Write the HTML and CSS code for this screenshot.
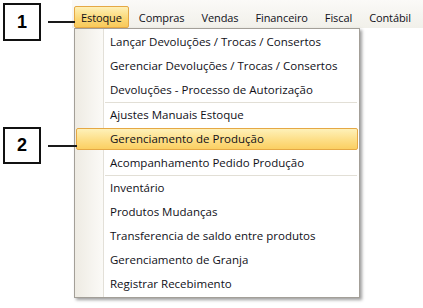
FILE: index.html
```html
<!DOCTYPE html>
<html lang="pt-BR">
<head>
<meta charset="utf-8">
<title>Menu Estoque</title>
<link rel="stylesheet" href="styles.css">
</head>
<body>
<div class="screen">
  <div class="callout callout-1">1</div>
  <div class="callout callout-2">2</div>
  <nav class="menubar">
    <span class="bar-item active">Estoque</span>
    <span class="bar-item">Compras</span>
    <span class="bar-item">Vendas</span>
    <span class="bar-item">Financeiro</span>
    <span class="bar-item">Fiscal</span>
    <span class="bar-item">Contábil</span>
  </nav>
  <ul class="dropdown">
    <li class="item">Lançar Devoluções / Trocas / Consertos</li>
    <li class="item">Gerenciar Devoluções / Trocas / Consertos</li>
    <li class="item">Devoluções - Processo de Autorização</li>
    <li class="sep"></li>
    <li class="item">Ajustes Manuais Estoque</li>
    <li class="item hot">Gerenciamento de Produção</li>
    <li class="item">Acompanhamento Pedido Produção</li>
    <li class="sep"></li>
    <li class="item">Inventário</li>
    <li class="item">Produtos Mudanças</li>
    <li class="item">Transferencia de saldo entre produtos</li>
    <li class="item">Gerenciamento de Granja</li>
    <li class="item">Registrar Recebimento</li>
  </ul>
</div>
</body>
</html>
```
FILE: styles.css
```css
html, body {
  margin: 0;
  padding: 0;
  background: #ffffff;
}

.screen {
  position: relative;
  width: 423px;
  height: 308px;
  overflow: hidden;
  font-family: "Open Sans", "Noto Sans", sans-serif;
  font-size: 11.5px;
  color: #101018;
}

/* numbered callouts */
.callout {
  position: absolute;
  left: 3px;
  width: 38px;
  height: 38px;
  box-sizing: border-box;
  border: 2px solid #111;
  background: #fff;
  display: flex;
  align-items: center;
  justify-content: center;
  font-family: "Liberation Sans", Arial, sans-serif;
  font-weight: bold;
  font-size: 18px;
  color: #000;
}
.callout::after {
  content: "";
  position: absolute;
  left: 43px;
  top: 50%;
  height: 2px;
  margin-top: -1px;
  background: #1a1a1a;
}
.callout-1 { top: 3px; }
.callout-1::after { width: 27px; }
.callout-2 { top: 127px; height: 37px; }
.callout-2::after { width: 29px; }

/* menu bar */
.menubar {
  margin-left: 72px;
  height: 28px;
  padding: 6px 0 0 2px;
  box-sizing: border-box;
  display: flex;
  gap: 3px;
  font-size: 11px;
  letter-spacing: -0.1px;
  background: linear-gradient(#fbfaf8, #f1f0ea);
}
.bar-item {
  height: 22px;
  line-height: 21px;
  padding: 0 6px;
  box-sizing: border-box;
  border: 1px solid transparent;
  border-radius: 2px;
  white-space: nowrap;
}
.bar-item.active {
  border-color: #e5a844;
  background: linear-gradient(#fef0b6, #fbd774 60%, #f8c95a);
}

/* dropdown */
.dropdown {
  list-style: none;
  margin: 0 0 0 74px;
  padding: 1px 1px 1px 1px;
  width: 286px;
  box-sizing: border-box;
  display: flex;
  flex-direction: column;
  border: 1px solid #a39f98;
  background:
    linear-gradient(to right, #eeebe3, #fbfaf7) 0 0 / 28px 100% no-repeat,
    linear-gradient(#e3e0d8, #e3e0d8) 28px 0 / 1px 100% no-repeat,
    #ffffff;
  box-shadow: 2px 2px 3px rgba(0, 0, 0, 0.38);
}
.item {
  height: 22px;
  margin: 1px 0;
  line-height: 20px;
  padding-left: 33px;
  box-sizing: border-box;
  border: 1px solid transparent;
  border-radius: 2px;
  white-space: nowrap;
}
.item.hot {
  border-color: #e5a844;
  background: linear-gradient(#fef1b9, #fdde86 55%, #fbcf62);
}
.sep {
  height: 1px;
  margin-left: 29px;
  margin-right: 1px;
  background: #e2dfd6;
}
```
